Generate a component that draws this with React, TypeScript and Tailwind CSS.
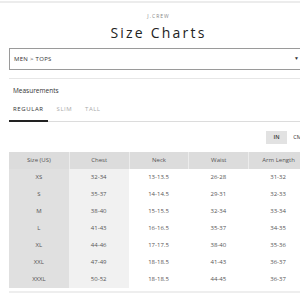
import React from "react"

const rows = [
  ["XS", "32-34", "13-13.5", "26-28", "31-32"],
  ["S", "35-37", "14-14.5", "29-31", "32-33"],
  ["M", "38-40", "15-15.5", "32-34", "33-34"],
  ["L", "41-43", "16-16.5", "35-37", "34-35"],
  ["XL", "44-46", "17-17.5", "38-40", "35-36"],
  ["XXL", "47-49", "18-18.5", "41-43", "36-37"],
  ["XXXL", "50-52", "18-18.5", "44-45", "36-37"],
]

const headers = ["Size (US)", "Chest", "Neck", "Waist", "Arm Length"]

export default function App() {
  return (
    <div className="w-[300px] h-[300px] overflow-hidden bg-white" style={{ fontFamily: "'Open Sans', sans-serif" }}>
      <div className="h-[2px] bg-[#ececec] mt-px" />
      <div className="w-[317px] px-[9px]">
        <div className="text-center text-[5px] tracking-[1px] text-[#888] mt-[9px] leading-[8px]">J.CREW</div>
        <h1 className="text-center text-[14px] tracking-[2.2px] text-[#222] leading-[20px] mt-[3px]">Size Charts</h1>
        <div className="mt-[5px] h-[22px] border border-[#9a9a9a] flex items-center justify-between pl-[4px] pr-[8px]">
          <span className="text-[6px] text-[#333] tracking-[0.3px]">MEN &gt; TOPS</span>
          <span className="text-[5px] text-[#333]">▼</span>
        </div>
        <div className="mt-[8px] h-px bg-[#e6e6e6]" />
        <div className="mt-[7px] pl-[4px] text-[6.5px] text-[#333] leading-[9px]">Measurements</div>
        <div className="mt-[10px] flex border-b border-[#dcdcdc]">
          <div className="px-[4px] pb-[6px] border-b-2 border-[#222] text-[6px] tracking-[0.6px] text-[#333] leading-[9px] -mb-px">
            REGULAR
          </div>
          <div className="ml-[9px] text-[6px] tracking-[0.5px] text-[#aaa] leading-[9px]">SLIM</div>
          <div className="ml-[13px] text-[6px] tracking-[0.5px] text-[#aaa] leading-[9px]">TALL</div>
        </div>
        <div className="mt-[9px] flex justify-end">
          <div className="w-[21px] h-[13px] bg-[#e2e2e2] flex items-center justify-center text-[5.5px] font-semibold text-[#333]">IN</div>
          <div className="w-[21px] h-[13px] flex items-center justify-center text-[5.5px] text-[#333]">CM</div>
        </div>
        <div className="mt-[8px] grid grid-cols-5 text-[6px] text-[#555]">
          {headers.map((h, i) => (
            <div
              key={h}
              className={`h-[17px] bg-[#dcdcdc] flex items-center justify-center ${i > 0 ? "border-l border-[#ececec]" : ""}`}
            >
              {h}
            </div>
          ))}
          {rows.map((r) =>
            r.map((c, i) => (
              <div
                key={r[0] + i}
                className={`h-[17px] flex items-center justify-center ${
                  i === 0 ? "bg-[#e0e0e0]" : i === 1 ? "bg-[#f1f1f1]" : "bg-white"
                }`}
              >
                {c}
              </div>
            ))
          )}
        </div>
        <div className="mt-[3px] h-[2px] bg-[#eeeeee]" />
      </div>
    </div>
  )
}
